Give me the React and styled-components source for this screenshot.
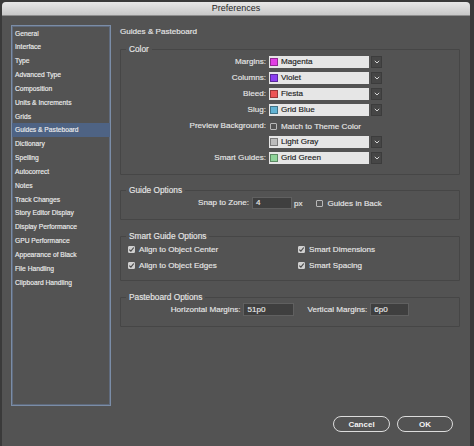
import React from "react";
import styled, { createGlobalStyle } from "styled-components";

const GlobalStyle = createGlobalStyle`
  html, body {
    margin: 0;
    padding: 0;
    background: #3a3a3a;
  }
  body {
    font-family: "Liberation Sans", Arial, sans-serif;
  }
`;

const panes = [
  "General",
  "Interface",
  "Type",
  "Advanced Type",
  "Composition",
  "Units & Increments",
  "Grids",
  "Guides & Pasteboard",
  "Dictionary",
  "Spelling",
  "Autocorrect",
  "Notes",
  "Track Changes",
  "Story Editor Display",
  "Display Performance",
  "GPU Performance",
  "Appearance of Black",
  "File Handling",
  "Clipboard Handling",
];

const colors = [
  { label: "Margins:", name: "Magenta", swatch: "#e23fe4" },
  { label: "Columns:", name: "Violet", swatch: "#8b3ff0" },
  { label: "Bleed:", name: "Fiesta", swatch: "#ec5456" },
  { label: "Slug:", name: "Grid Blue", swatch: "#62b3d3" },
];

function Chevron() {
  return (
    <svg width="6" height="4" viewBox="0 0 6 4">
      <polyline points="0.8,0.8 3,3 5.2,0.8" fill="none" stroke="#d6d6d6" strokeWidth="1" />
    </svg>
  );
}

function Check({ checked }) {
  return (
    <Box $checked={checked}>
      {checked && (
        <svg width="7" height="7" viewBox="0 0 7 7">
          <polyline points="1.3,3.6 2.9,5.2 5.8,1.5" fill="none" stroke="#4a4a4a" strokeWidth="1.2" />
        </svg>
      )}
    </Box>
  );
}

function Dropdown({ name, swatch }) {
  return (
    <Select>
      <Field>
        <Swatch $color={swatch} />
        {name}
      </Field>
      <Arrow>
        <Chevron />
      </Arrow>
    </Select>
  );
}

function App() {
  return (
    <>
      <GlobalStyle />
      <Page>
        <Window>
          <TitleBar>Preferences</TitleBar>
          <Body>
            <Sidebar>
              {panes.map((p) => (
                <Pane key={p} $active={p === "Guides & Pasteboard"}>
                  {p}
                </Pane>
              ))}
            </Sidebar>

            <Main>
              <Heading>Guides &amp; Pasteboard</Heading>

              <Group>
                <Legend>Color</Legend>
                <ColorRows>
                  {colors.map((c) => (
                    <ColorRow key={c.label}>
                      <Label>{c.label}</Label>
                      <Dropdown name={c.name} swatch={c.swatch} />
                    </ColorRow>
                  ))}
                  <ColorRow>
                    <Label>Preview Background:</Label>
                    <Option $inset>
                      <Check />
                      Match to Theme Color
                    </Option>
                  </ColorRow>
                  <ColorRow>
                    <span />
                    <Dropdown name="Light Gray" swatch="#bdbdbd" />
                  </ColorRow>
                  <ColorRow>
                    <Label>Smart Guides:</Label>
                    <Dropdown name="Grid Green" swatch="#8fd49a" />
                  </ColorRow>
                </ColorRows>
              </Group>

              <Group $gap={10}>
                <Legend>Guide Options</Legend>
                <InlineRow $top={2} $bottom={10}>
                  <Label>Snap to Zone:</Label>
                  <TextInput $width={40}>4</TextInput>
                  <Unit>px</Unit>
                  <Option>
                    <Check />
                    Guides in Back
                  </Option>
                </InlineRow>
              </Group>

              <Group $gap={11}>
                <Legend>Smart Guide Options</Legend>
                <CheckGrid>
                  <Option>
                    <Check checked />
                    Align to Object Center
                  </Option>
                  <Option>
                    <Check checked />
                    Smart Dimensions
                  </Option>
                  <Option>
                    <Check checked />
                    Align to Object Edges
                  </Option>
                  <Option>
                    <Check checked />
                    Smart Spacing
                  </Option>
                </CheckGrid>
              </Group>

              <Group $gap={11}>
                <Legend>Pasteboard Options</Legend>
                <InlineRow $top={1} $bottom={10} $height={13}>
                  <Label>Horizontal Margins:</Label>
                  <TextInput $width={51} $height={13}>51p0</TextInput>
                  <Spacer />
                  <Label>Vertical Margins:</Label>
                  <TextInput $width={39} $height={13}>6p0</TextInput>
                </InlineRow>
              </Group>

              <Footer>
                <Button>Cancel</Button>
                <Button $wide={56}>OK</Button>
              </Footer>
            </Main>
          </Body>
        </Window>
      </Page>
    </>
  );
}

const Page = styled.div`
  width: 474px;
  height: 446px;
  overflow: hidden;
  background: #3a3a3a;
`;

const Window = styled.div`
  margin: 2px 0 0 2px;
  width: 468px;
  height: 444px;
  background: #535353;
  border-radius: 4px 4px 0 0;
  overflow: hidden;
  display: flex;
  flex-direction: column;
`;

const TitleBar = styled.div`
  height: 13px;
  flex: none;
  border-bottom: 1px solid #8e8e8e;
  background: linear-gradient(#e8e8e8, #c8c8c8);
  color: #262626;
  font-size: 9px;
  line-height: 13px;
  text-align: center;
`;

const Body = styled.div`
  flex: 1;
  display: flex;
  gap: 9px;
  padding: 9px 10px 0 9px;
`;

const Sidebar = styled.div`
  width: 98px;
  height: 378px;
  flex: none;
  border: 1px solid #7b8da7;
  box-shadow: inset 0 0 0 1px #5f6a7c;
  padding: 0.5px 0 0;
  box-sizing: content-box;
`;

const Pane = styled.div`
  height: 13.85px;
  line-height: 13.85px;
  padding-left: 3px;
  font-size: 6.7px;
  color: #ececec;
  -webkit-text-stroke: 0.15px #ececec;
  white-space: nowrap;
  background: ${(p) => (p.$active ? "#4e6384" : "transparent")};
`;

const Main = styled.div`
  width: 340px;
  display: flex;
  flex-direction: column;
  color: #e6e6e6;
  font-size: 8.1px;
  -webkit-text-stroke: 0.15px currentColor;
`;

const Heading = styled.div`
  margin-top: 2px;
  height: 10px;
  line-height: 10px;
  font-size: 8.1px;
`;

const Group = styled.fieldset`
  margin: ${(p) => (p.$gap ? `${p.$gap}px` : "7px")} 0 0;
  padding: 0;
  min-width: 0;
  border: 1px solid #464646;
  border-radius: 1px;
`;

const Legend = styled.legend`
  margin-left: 5px;
  padding: 0 3px;
  height: 10px;
  line-height: 10px;
  font-size: 8.3px;
  color: #e6e6e6;
`;

const ColorRows = styled.div`
  display: flex;
  flex-direction: column;
  gap: 4px;
  padding: 2px 0 10px;
`;

const ColorRow = styled.div`
  display: grid;
  grid-template-columns: 145px auto;
  column-gap: 3px;
  height: 12px;
  align-items: center;
`;

const Label = styled.span`
  text-align: right;
  white-space: nowrap;
  line-height: 12px;
`;

const Select = styled.div`
  display: flex;
  gap: 2px;
  height: 12px;
`;

const Field = styled.div`
  width: 100px;
  height: 12px;
  box-sizing: border-box;
  display: flex;
  align-items: center;
  gap: 3px;
  padding-left: 1px;
  background: #e6e6e6;
  color: #1c1c1c;
  line-height: 12px;
`;

const Swatch = styled.span`
  width: 8px;
  height: 8px;
  box-sizing: border-box;
  border: 1px solid rgba(0, 0, 0, 0.35);
  background: ${(p) => p.$color};
`;

const Arrow = styled.div`
  width: 11px;
  height: 12px;
  box-sizing: border-box;
  display: flex;
  align-items: center;
  justify-content: center;
  background: #464646;
  border: 1px solid #3c3c3c;
`;

const Option = styled.span`
  display: flex;
  align-items: center;
  gap: 4px;
  height: 12px;
  white-space: nowrap;
  padding-left: ${(p) => (p.$inset ? "1px" : "0")};
`;

const Box = styled.span`
  width: 7px;
  height: 7px;
  box-sizing: border-box;
  flex: none;
  display: flex;
  border: 1px solid ${(p) => (p.$checked ? "#cfcfcf" : "#b8b8b8")};
  background: ${(p) => (p.$checked ? "#cfcfcf" : "transparent")};
  border-radius: 1px;
  -webkit-text-stroke: 0;

  svg {
    margin: -1px;
  }
`;

const InlineRow = styled.div`
  display: flex;
  align-items: center;
  justify-content: center;
  height: ${(p) => p.$height || 12}px;
  padding: ${(p) => p.$top}px 0 ${(p) => p.$bottom}px;

  ${Label} {
    margin-right: 3px;
  }
`;

const TextInput = styled.div`
  width: ${(p) => p.$width}px;
  height: ${(p) => p.$height || 12}px;
  line-height: ${(p) => (p.$height || 12) - 2}px;
  box-sizing: border-box;
  padding-left: 3px;
  background: #3f3f3f;
  border: 1px solid #606060;
  color: #e8e8e8;
`;

const Unit = styled.span`
  margin: 0 14px 0 2px;
`;

const Spacer = styled.span`
  width: 13px;
`;

const CheckGrid = styled.div`
  display: grid;
  grid-template-columns: 170px auto;
  row-gap: 4px;
  padding: 2px 0 9px 7px;
`;

const Footer = styled.div`
  margin-top: auto;
  display: flex;
  justify-content: flex-end;
  gap: 7px;
  padding: 0 7px 14px 0;
`;

const Button = styled.button`
  width: ${(p) => p.$wide || 57}px;
  height: 16px;
  padding: 0;
  border: 1.5px solid #dcdcdc;
  border-radius: 8px;
  background: transparent;
  color: #f2f2f2;
  font-family: "Liberation Sans", Arial, sans-serif;
  font-size: 8px;
  font-weight: bold;
  -webkit-text-stroke: 0;
`;

export default App;
